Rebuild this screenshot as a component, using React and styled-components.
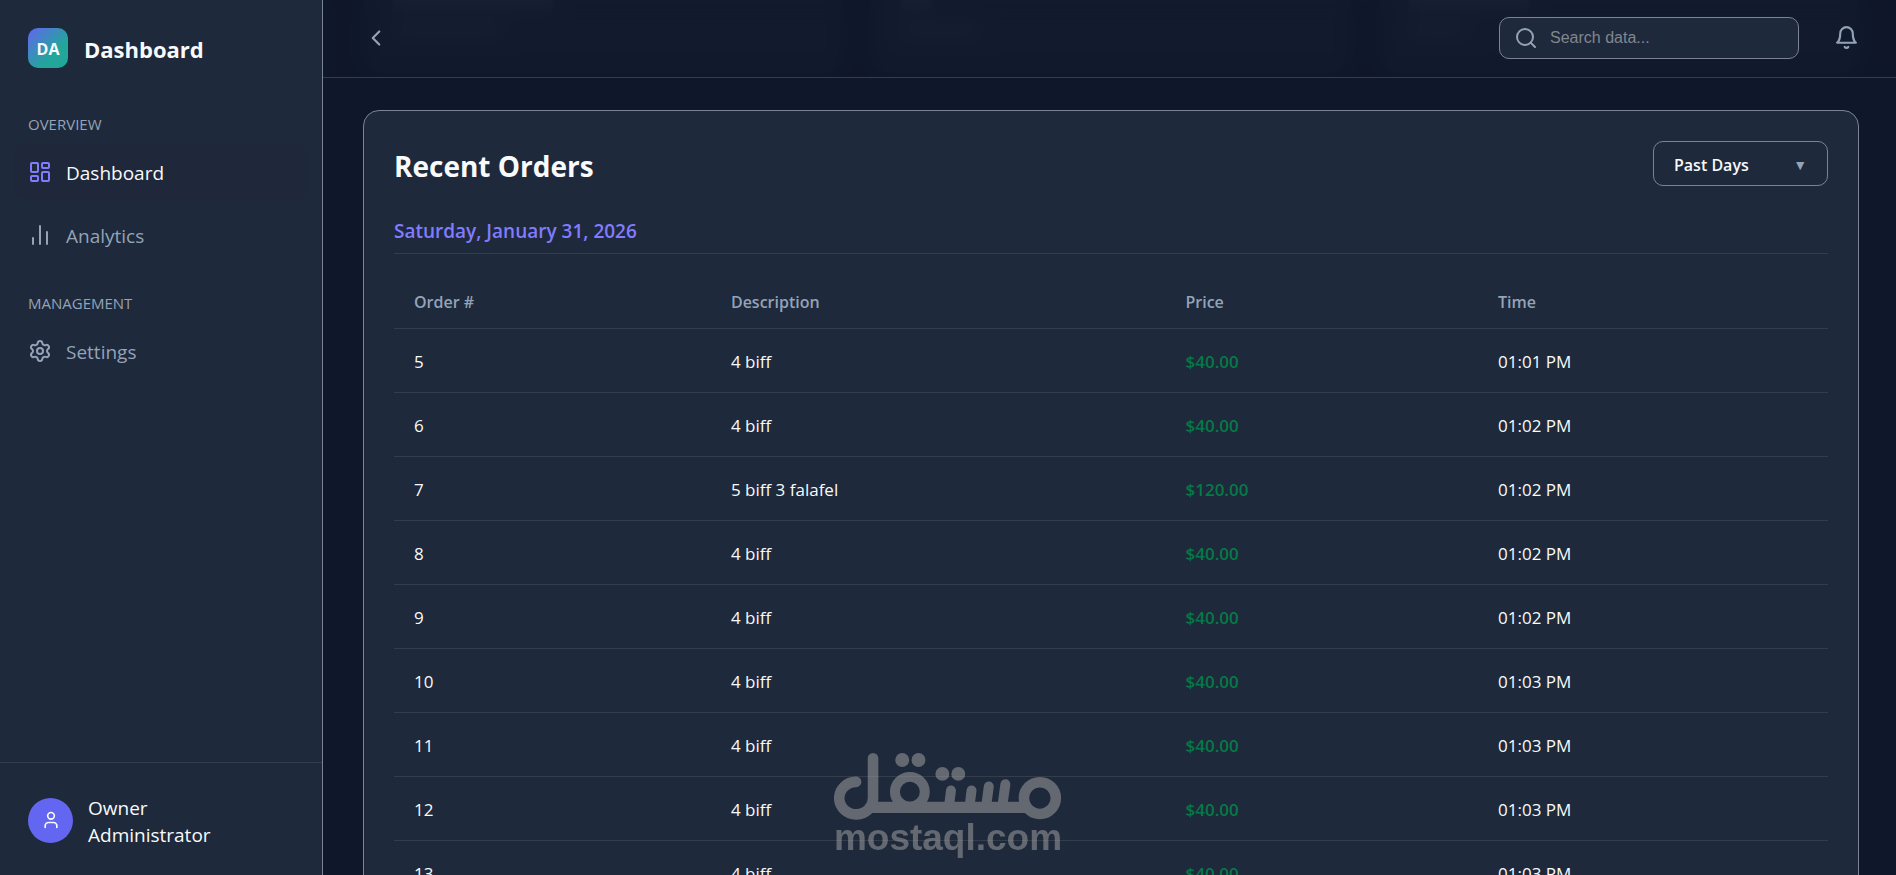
import React from 'react'
import styled, { createGlobalStyle } from 'styled-components'
import { ChevronLeft, LayoutDashboard, Search, Settings, User, ChartNoAxesColumn } from 'lucide-react'

const orders = [
    { id: 5, description: '4 biff', price: '$40.00', time: '01:01 PM' },
    { id: 6, description: '4 biff', price: '$40.00', time: '01:02 PM' },
    { id: 7, description: '5 biff 3 falafel', price: '$120.00', time: '01:02 PM' },
    { id: 8, description: '4 biff', price: '$40.00', time: '01:02 PM' },
    { id: 9, description: '4 biff', price: '$40.00', time: '01:02 PM' },
    { id: 10, description: '4 biff', price: '$40.00', time: '01:03 PM' },
    { id: 11, description: '4 biff', price: '$40.00', time: '01:03 PM' },
    { id: 12, description: '4 biff', price: '$40.00', time: '01:03 PM' },
    { id: 13, description: '4 biff', price: '$40.00', time: '01:03 PM' },
]

const stats = [
    { value: 160, label: 110 },
    { value: 30, label: 80 },
    { value: 120, label: 60 },
]

const menu = [
    { title: 'Overview', items: [
        { name: 'Dashboard', icon: LayoutDashboard, active: true },
        { name: 'Analytics', icon: ChartNoAxesColumn },
    ] },
    { title: 'Management', items: [
        { name: 'Settings', icon: Settings },
    ] },
]

const BellIcon = () => (
    <svg width="25" height="25" viewBox="0 0 24 24" fill="none" stroke="currentColor" strokeWidth="2" strokeLinecap="round" strokeLinejoin="round">
        <path d="M18 8A6 6 0 0 0 6 8c0 7-3 9-3 9h18s-3-2-3-9" />
        <path d="M13.73 21a2 2 0 0 1-3.46 0" />
    </svg>
)

const Sidebar = () => (
    <Aside>
        <Brand>
            <Logo>DA</Logo>
            <BrandName>Dashboard</BrandName>
        </Brand>
        <Nav>
            {menu.map((group) => (
                <NavGroup key={group.title}>
                    <NavTitle>{group.title}</NavTitle>
                    {group.items.map(({ name, icon: Icon, active }) => (
                        <NavLink key={name} href="#" $active={active}>
                            <Icon size={24} strokeWidth={2} />
                            <span>{name}</span>
                        </NavLink>
                    ))}
                </NavGroup>
            ))}
        </Nav>
        <Profile>
            <Avatar><User size={20} strokeWidth={2} /></Avatar>
            <ProfileText>
                <p>Owner</p>
                <p>Administrator</p>
            </ProfileText>
        </Profile>
    </Aside>
)

const Watermark = () => (
    <Mark>
        <svg width="228" height="67" viewBox="102 66 684 202" fill="none" stroke="currentColor" strokeWidth="32" strokeLinecap="round">
            <circle cx="721" cy="202" r="48" />
            <circle cx="329" cy="183" r="45" strokeWidth="30" />
            <path d="M690 230H212" strokeLinecap="butt" strokeWidth="34" />
            <path d="M617 160l-8 58M567 167l-7 52M515 179l-5 40M453 179l-5 40" strokeWidth="30" />
            <path d="M218 82V200A51 49 0 1 1 167 153" />
            <g fill="currentColor" stroke="none">
                <circle cx="306" cy="87" r="21" />
                <circle cx="355" cy="87" r="21" />
                <circle cx="427" cy="129" r="21" />
                <circle cx="475" cy="129" r="21" />
            </g>
        </svg>
        <MarkText>mostaql.com</MarkText>
    </Mark>
)

const App = () => {
    return (
        <Layout>
            <GlobalStyle />
            <Sidebar />
            <Main>
                <Topbar>
                    <IconButton aria-label="Collapse sidebar"><ChevronLeft size={26} /></IconButton>
                    <Actions>
                        <SearchBox>
                            <Search size={24} />
                            <input type="text" aria-label="Search data" placeholder="Search data..." />
                        </SearchBox>
                        <IconButton aria-label="Notifications"><BellIcon /></IconButton>
                    </Actions>
                </Topbar>
                <Content>
                    <StatRow aria-hidden="true">
                        {stats.map((s, i) => (
                            <StatCard key={i}>
                                <Ghost $w={s.value} />
                                <Ghost $w={s.label} />
                            </StatCard>
                        ))}
                    </StatRow>
                    <Card>
                        <CardHeader>
                            <h2>Recent Orders</h2>
                            <SelectWrap>
                                <select aria-label="Order period" defaultValue="past">
                                    <option value="past">Past Days</option>
                                    <option value="today">Today</option>
                                </select>
                                <span>▼</span>
                            </SelectWrap>
                        </CardHeader>
                        <DateTitle>Saturday, January 31, 2026</DateTitle>
                        <Table>
                            <colgroup>
                                <col style={{ width: '22.1%' }} />
                                <col style={{ width: '31.7%' }} />
                                <col style={{ width: '21.8%' }} />
                                <col style={{ width: '24.4%' }} />
                            </colgroup>
                            <thead>
                                <tr>
                                    <th>Order #</th>
                                    <th>Description</th>
                                    <th>Price</th>
                                    <th>Time</th>
                                </tr>
                            </thead>
                            <tbody>
                                {orders.map((order) => (
                                    <tr key={order.id}>
                                        <td>{order.id}</td>
                                        <td>{order.description}</td>
                                        <Price>{order.price}</Price>
                                        <td>{order.time}</td>
                                    </tr>
                                ))}
                            </tbody>
                        </Table>
                    </Card>
                </Content>
            </Main>
            <Watermark />
        </Layout>
    )
}

const GlobalStyle = createGlobalStyle`
    * {
        box-sizing: border-box;
        margin: 0;
        padding: 0;
    }
    body {
        background: #0f172a;
        color: #f8fafc;
        font-family: 'Segoe UI', 'Open Sans', 'Noto Sans', sans-serif;
        font-size: 16px;
    }
`

const Layout = styled.div`
    display: flex;
    height: 100vh;
    overflow: hidden;
`

const Aside = styled.aside`
    display: flex;
    flex-direction: column;
    flex: 0 0 323px;
    background: #1e293b;
    border-right: 1px solid #7b8493;
`

const Brand = styled.div`
    display: flex;
    align-items: center;
    gap: 16px;
    padding: 28px;
`

const Logo = styled.div`
    display: grid;
    place-items: center;
    width: 40px;
    height: 40px;
    padding-top: 2px;
    border-radius: 10px;
    background: linear-gradient(135deg, #6366f1, #22a69a 65%);
    font-size: 16px;
    font-weight: 700;
`

const BrandName = styled.h1`
    padding-top: 2px;
    font-size: 22px;
    line-height: 32px;
    font-weight: 700;
`

const Nav = styled.nav`
    flex: 1;
    padding: 16px 14px;
`

const NavGroup = styled.div`
    margin-bottom: 28px;
`

const NavTitle = styled.h3`
    padding: 0 14px;
    margin-bottom: 8px;
    color: #94a3b8;
    font-size: 15px;
    line-height: 24px;
    font-weight: 400;
    text-transform: uppercase;
`

const NavLink = styled.a`
    display: flex;
    align-items: center;
    gap: 14px;
    height: 56px;
    margin-bottom: 7px;
    padding: 0 14px;
    border-radius: 14px;
    background: ${(p) => (p.$active ? '#1f273a' : 'transparent')};
    color: ${(p) => (p.$active ? '#f8fafc' : '#94a3b8')};
    font-size: 19px;
    text-decoration: none;

    svg {
        color: ${(p) => (p.$active ? '#817cff' : '#94a3b8')};
    }
    span {
        padding-top: 2px;
    }
`

const Profile = styled.div`
    display: flex;
    align-items: center;
    gap: 15px;
    height: 113px;
    padding: 2px 28px 0;
    border-top: 1px solid #343e4a;
`

const Avatar = styled.div`
    display: grid;
    place-items: center;
    width: 45px;
    height: 45px;
    border-radius: 50%;
    background: #6366f1;
`

const ProfileText = styled.div`
    padding-top: 4px;
    font-size: 19px;
    line-height: 27px;
`

const Main = styled.main`
    flex: 1;
    min-width: 0;
    overflow: hidden;
`

const Topbar = styled.header`
    position: sticky;
    top: 0;
    z-index: 2;
    display: flex;
    align-items: center;
    justify-content: space-between;
    height: 78px;
    margin-bottom: -78px;
    padding: 0 37px 2px 40px;
    border-bottom: 1px solid #343e4a;
    background: rgba(15, 23, 42, 0.8);
    backdrop-filter: blur(10px);
`

const Actions = styled.div`
    display: flex;
    align-items: center;
    gap: 35px;
`

const IconButton = styled.button`
    display: grid;
    place-items: center;
    border: 0;
    background: none;
    color: #94a3b8;
    cursor: pointer;
`

const SearchBox = styled.label`
    display: flex;
    align-items: center;
    gap: 12px;
    width: 300px;
    height: 42px;
    padding: 0 14px;
    border: 1px solid #7b8493;
    border-radius: 10px;
    background: #1e293b;
    color: #94a3b8;

    input {
        flex: 1;
        min-width: 0;
        border: 0;
        outline: 0;
        background: none;
        color: #f8fafc;
        font-family: 'Liberation Sans', Arial, sans-serif;
        font-size: 16px;
    }
    input::placeholder {
        color: #81868f;
    }
`

const Content = styled.div`
    padding: 0 37px 40px 40px;
`

const StatRow = styled.div`
    display: grid;
    grid-template-columns: repeat(3, 1fr);
    gap: 28px;
    margin-bottom: 38px;
`

const StatCard = styled.div`
    display: flex;
    flex-direction: column;
    gap: 16px;
    height: 72px;
    padding: 0 30px;
    border-radius: 0 0 16px 16px;
    background: #1e293b;
`

const Ghost = styled.div`
    width: ${(p) => p.$w}px;
    height: 10px;
    background: #3c4552;
`

const Card = styled.section`
    padding: 30px;
    border: 1px solid #7b8493;
    border-radius: 16px;
    background: #1e293b;
`

const CardHeader = styled.div`
    display: flex;
    align-items: center;
    justify-content: space-between;
    margin-bottom: 30px;

    h2 {
        padding-top: 4px;
        font-size: 28px;
        line-height: 40px;
    }
`

const SelectWrap = styled.div`
    display: flex;
    align-items: center;
    width: 175px;
    height: 45px;
    padding: 2px 20px 0;
    border: 1px solid #7b8493;
    border-radius: 10px;

    select {
        flex: 1;
        appearance: none;
        border: 0;
        background: none;
        color: #f8fafc;
        font-family: inherit;
        font-size: 16px;
        font-weight: 600;
    }
    span {
        color: #94a3b8;
        font-size: 14px;
        pointer-events: none;
    }
`

const DateTitle = styled.h3`
    padding: 2px 0 8px;
    margin-bottom: 20px;
    border-bottom: 1px solid #343e4a;
    color: #817cff;
    font-size: 19px;
    line-height: 27px;
    font-weight: 600;
`

const Table = styled.table`
    width: 100%;
    border-collapse: collapse;
    table-layout: fixed;

    th,
    td {
        height: 64px;
        padding: 2px 20px 0;
        border-bottom: 1px solid #343e4a;
        font-size: 17px;
        text-align: left;
    }
    th {
        height: 54px;
        color: #94a3b8;
        font-size: 16px;
        font-weight: 600;
    }
`

const Price = styled.td`
    color: #057a48;
    font-weight: 600;
`

const Mark = styled.div`
    position: fixed;
    inset: auto 0 19px;
    z-index: 3;
    display: flex;
    flex-direction: column;
    align-items: center;
    color: #a8a8a8;
    opacity: 0.5;
    pointer-events: none;
`

const MarkText = styled.span`
    font-family: 'Liberation Sans', Arial, sans-serif;
    font-size: 37px;
    line-height: 36px;
    font-weight: 700;
`

export default App
